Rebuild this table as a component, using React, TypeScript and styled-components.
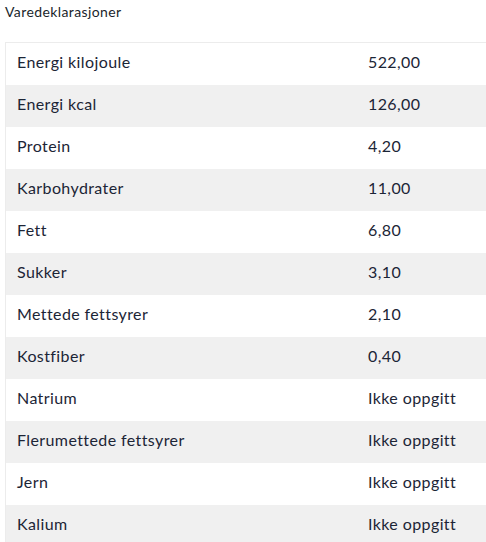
import React from "react";
import styled, { createGlobalStyle } from "styled-components";

const Global = createGlobalStyle`
  html, body { margin: 0; padding: 0; background: #fff; overflow: hidden; }
  body { font-family: Lato, "Open Sans", sans-serif; color: #1c2536; }
`;

const Page = styled.div`
  padding: 3px 0 0 5px;
  width: 481px;
  overflow: hidden;
`;

const Title = styled.h2`
  margin: 0 0 21px 0;
  font-size: 14px;
  line-height: 18px;
  font-weight: 400;
  letter-spacing: 0.4px;
  color: #1a1f2b;
`;

const Table = styled.div`
  border: 1px solid #ececec;
  border-right: none;
  width: 540px;
`;

const Row = styled.div<{ $alt: boolean }>`
  display: grid;
  grid-template-columns: 351px 1fr;
  height: 42px;
  align-items: center;
  background: ${(p) => (p.$alt ? "#f0f0f0" : "#ffffff")};
  font-size: 16px;
  letter-spacing: 0.4px;
  color: #1c2536;
`;

const Cell = styled.div`
  padding-left: 11px;
  line-height: 20px;
  padding-bottom: 5px;
`;

const rows: [string, string][] = [
  ["Energi kilojoule", "522,00"],
  ["Energi kcal", "126,00"],
  ["Protein", "4,20"],
  ["Karbohydrater", "11,00"],
  ["Fett", "6,80"],
  ["Sukker", "3,10"],
  ["Mettede fettsyrer", "2,10"],
  ["Kostfiber", "0,40"],
  ["Natrium", "Ikke oppgitt"],
  ["Flerumettede fettsyrer", "Ikke oppgitt"],
  ["Jern", "Ikke oppgitt"],
  ["Kalium", "Ikke oppgitt"],
];

export default function App() {
  return (
    <Page>
      <Global />
      <Title>Varedeklarasjoner</Title>
      <Table>
        {rows.map(([k, v], i) => (
          <Row key={k} $alt={i % 2 === 1}>
            <Cell>{k}</Cell>
            <Cell>{v}</Cell>
          </Row>
        ))}
      </Table>
    </Page>
  );
}
